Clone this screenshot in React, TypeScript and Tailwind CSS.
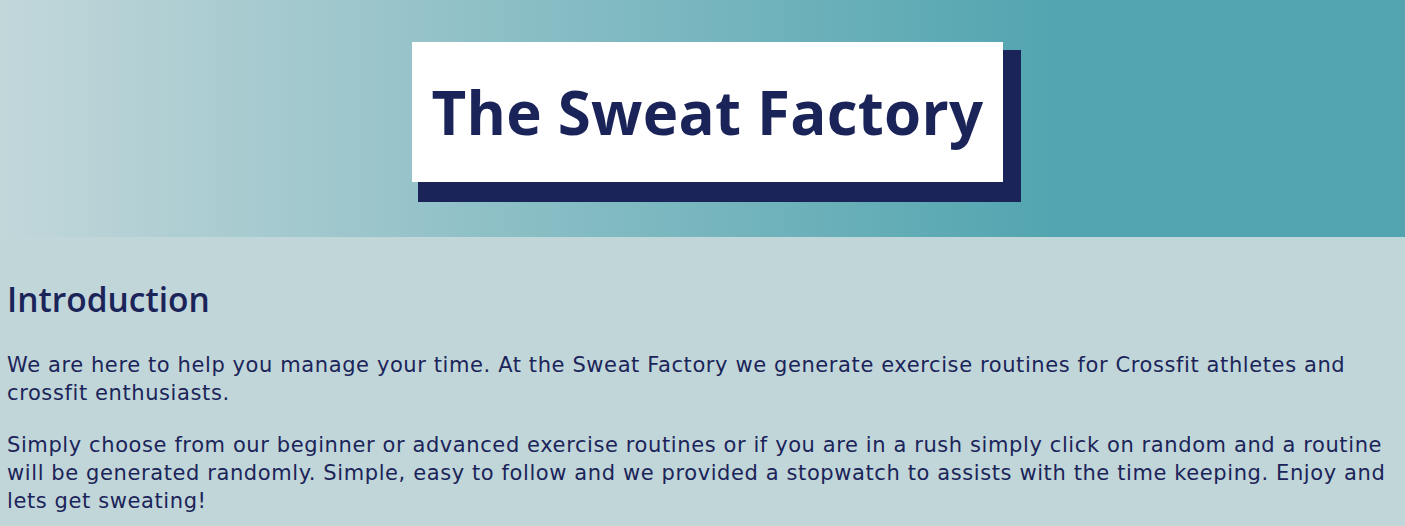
export default function App() {
  return (
    <div className="min-h-screen bg-[#c1d6d9] font-['Open_Sans',sans-serif] text-[#1b2459]">
      <header className="flex h-[237px] items-start justify-center bg-[linear-gradient(90deg,#c2d7da_0%,#52a5b0_75%,#52a5b0_100%)] pt-[42px]">
        <div className="ml-[10px] flex h-[140px] w-[591px] items-center justify-center bg-white shadow-[12px_14px_0_6px_#1b2459]">
          <h1 className="text-[60px] font-bold leading-none tracking-[0.25px]">The Sweat Factory</h1>
        </div>
      </header>

      <main className="px-[7px] pt-[42px]">
        <h2 className="text-[33.5px] font-semibold leading-tight">Introduction</h2>
        <p className="mt-[30px] font-['DejaVu_Sans',sans-serif] text-[21px] leading-[28px] tracking-[0.6px]">
          We are here to help you manage your time. At the Sweat Factory we generate exercise routines for Crossfit athletes and crossfit enthusiasts.
        </p>
        <p className="mt-[24px] font-['DejaVu_Sans',sans-serif] text-[21px] leading-[28px] tracking-[0.6px]">
          Simply choose from our beginner or advanced exercise routines or if you are in a rush simply click on random and a routine will be generated randomly. Simple, easy to follow and we provided a stopwatch to assists with the time keeping. Enjoy and lets get sweating!
        </p>
      </main>
    </div>
  );
}
